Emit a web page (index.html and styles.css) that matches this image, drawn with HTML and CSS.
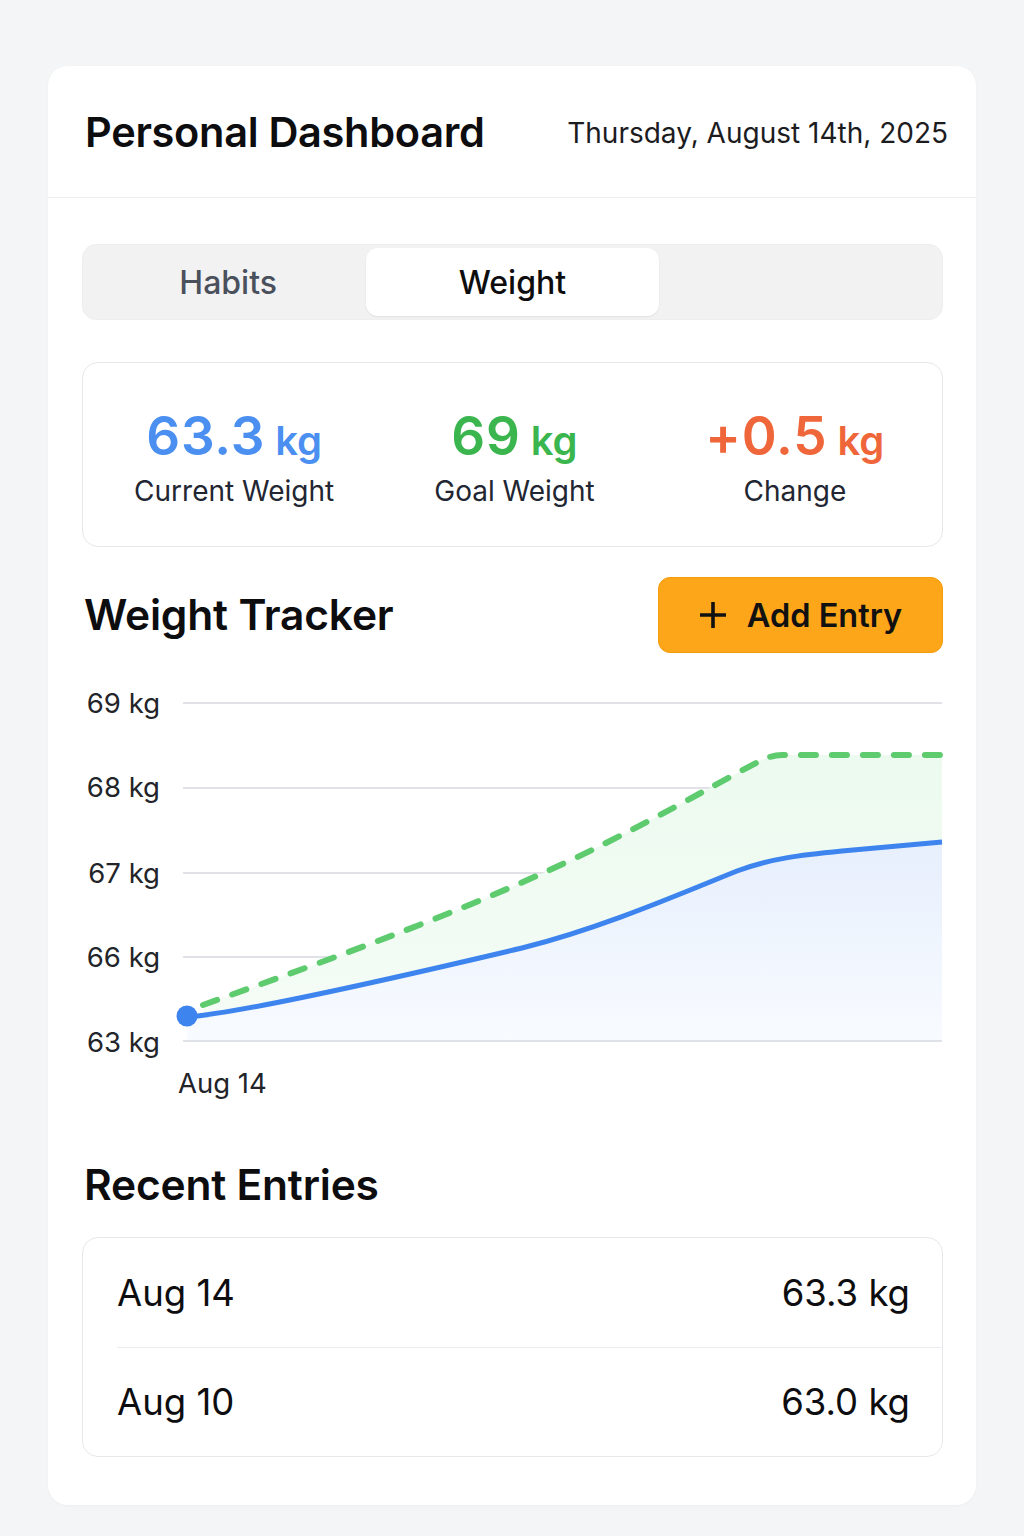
FILE: index.html
```html
<!DOCTYPE html>
<html lang="en">
<head>
<meta charset="utf-8">
<title>Personal Dashboard</title>
<link rel="stylesheet" href="styles.css">
</head>
<body>
<main class="card">
  <header class="header">
    <h1 class="title">Personal Dashboard</h1>
    <div class="date">Thursday, August 14th, 2025</div>
  </header>
  <section class="content">
    <nav class="tabs">
      <div class="tab">Habits</div>
      <div class="tab active">Weight</div>
      <div class="tab empty"></div>
    </nav>

    <div class="stats">
      <div class="stat">
        <div class="stat-value blue">63.3<span class="unit">kg</span></div>
        <div class="stat-label">Current Weight</div>
      </div>
      <div class="stat">
        <div class="stat-value green">69<span class="unit">kg</span></div>
        <div class="stat-label">Goal Weight</div>
      </div>
      <div class="stat">
        <div class="stat-value orange">+0.5<span class="unit">kg</span></div>
        <div class="stat-label">Change</div>
      </div>
    </div>

    <div class="tracker-head">
      <h2 class="section-title">Weight Tracker</h2>
      <button class="add-btn">
        <svg class="plus" width="28" height="28" viewBox="0 0 28 28"><path d="M14 1v26M1 14h26" stroke="#111" stroke-width="3.6" stroke-linecap="butt"/></svg>
        <span>Add Entry</span>
      </button>
    </div>

    <svg class="chart" width="861" height="425" viewBox="0 0 861 425">
      <defs>
        <linearGradient id="gfill" x1="0" y1="0" x2="0" y2="1">
          <stop offset="0" stop-color="#ecfaef"/>
          <stop offset="1" stop-color="#f5fcf6"/>
        </linearGradient>
        <linearGradient id="bfill" x1="0" y1="0" x2="0" y2="1">
          <stop offset="0" stop-color="#e7effd"/>
          <stop offset="1" stop-color="#f8fbff"/>
        </linearGradient>
      </defs>
      <g class="grid">
        <line x1="101" y1="23" x2="860" y2="23"/>
        <line x1="101" y1="108" x2="860" y2="108"/>
        <line x1="101" y1="193" x2="860" y2="193"/>
        <line x1="101" y1="277" x2="860" y2="277"/>
      </g>
      <path d="M121,325 C260,275 400,225 520,165 C590,130 650,95 680,80 Q690,75 700,75 L860,75 L860,361 L121,361 Z" fill="url(#gfill)"/>
      <path d="M105,337 C160,333 330,294 440,268 C520,248 600,213 655,191 C690,178 720,175 760,171 L860,162 L860,361 L105,361 Z" fill="url(#bfill)"/>
      <line class="gridline" x1="101" y1="361" x2="860" y2="361"/>
      <path d="M121,325 C260,275 400,225 520,165 C590,130 650,95 680,80 Q690,75 700,75 L860,75" fill="none" stroke="#5dcb6e" stroke-width="6" stroke-linecap="round" stroke-dasharray="15 16"/>
      <path d="M105,337 C160,333 330,294 440,268 C520,248 600,213 655,191 C690,178 720,175 760,171 L860,162" fill="none" stroke="#3d84ee" stroke-width="5"/>
      <circle cx="105" cy="336" r="10.5" fill="#3d84ee"/>
      <g class="ylabels">
        <text x="78" y="33">69 kg</text>
        <text x="78" y="117">68 kg</text>
        <text x="78" y="203">67 kg</text>
        <text x="78" y="287">66 kg</text>
        <text x="78" y="372">63 kg</text>
      </g>
      <text class="xlabel" x="96" y="413">Aug 14</text>
    </svg>

    <h2 class="section-title recent-title">Recent Entries</h2>
    <div class="entries">
      <div class="entry"><span>Aug 14</span><span>63.3 kg</span></div>
      <div class="entry"><span>Aug 10</span><span>63.0 kg</span></div>
    </div>
  </section>
</main>
</body>
</html>
```

FILE: styles.css
```css
* { box-sizing: border-box; }

html, body {
  margin: 0;
  padding: 0;
}

body {
  background: #f4f5f7;
  font-family: "Inter", "Liberation Sans", Arial, sans-serif;
  color: #111;
  padding: 66px 48px 32px;
}

.card {
  background: #fff;
  border-radius: 20px;
  box-shadow: 0 1px 3px rgba(0, 0, 0, 0.03);
  overflow: hidden;
}

.header {
  height: 132px;
  display: flex;
  align-items: center;
  justify-content: space-between;
  padding: 0 28px 0 37px;
  border-bottom: 1px solid #ebecef;
}

.title {
  margin: 0;
  font-size: 41.5px;
  font-weight: 600;
  letter-spacing: -0.3px;
  color: #0d0d0f;
}

.date {
  font-size: 28px;
  font-weight: 400;
  color: #1c1c1f;
  padding-top: 2px;
}

.content {
  padding: 46px 33px 48px 34px;
}

.tabs {
  display: grid;
  grid-template-columns: repeat(3, 1fr);
  height: 76px;
  padding: 3px;
  background: #f2f2f3;
  border-radius: 14px;
  border: 1px solid #eeeef0;
}

.tab {
  display: flex;
  align-items: center;
  justify-content: center;
  font-size: 32px;
  font-weight: 500;
  color: #4a505c;
  border-radius: 12px;
}

.tab.active {
  margin: 0 -4px;
  background: #fff;
  color: #0d0d0f;
  box-shadow: 0 1px 2px rgba(0, 0, 0, 0.08);
}

.stats {
  margin-top: 42px;
  display: grid;
  grid-template-columns: repeat(3, 1fr);
  border: 1px solid #e7e8ec;
  border-radius: 16px;
  padding: 47px 7px 38px 11px;
}

.stat {
  display: flex;
  flex-direction: column;
  align-items: center;
}

.stat-value {
  font-size: 53px;
  font-weight: 600;
  line-height: 1;
  height: 50px;
  display: flex;
  align-items: baseline;
  letter-spacing: 0.8px;
}

.unit {
  font-size: 40px;
  margin-left: 10px;
  letter-spacing: 0;
}

.blue { color: #4b8ff1; }
.green { color: #3bb64f; }
.orange { color: #ef663a; }

.stat-label {
  margin-top: 14px;
  font-size: 28px;
  line-height: 34px;
  color: #222632;
}

.tracker-head {
  margin-top: 30px;
  display: flex;
  align-items: center;
  justify-content: space-between;
}

.section-title {
  margin: 0 0 0 2px;
  font-size: 42.5px;
  font-weight: 600;
  line-height: 48px;
  letter-spacing: -0.2px;
  color: #0d0d0f;
}

.add-btn {
  width: 285px;
  height: 76px;
  display: flex;
  align-items: center;
  justify-content: center;
  gap: 20px;
  background: #fea619;
  border: 1px solid #f39c0c;
  border-radius: 12px;
  font-family: inherit;
  font-size: 32.5px;
  font-weight: 600;
  color: #111;
  padding: 0;
}

.plus { display: block; }

.chart {
  display: block;
  margin-top: 27px;
}

.chart .grid line,
.chart .gridline {
  stroke: #d6d9df;
  stroke-width: 1.5;
}

.chart text {
  font-family: "Inter", "Liberation Sans", Arial, sans-serif;
  font-size: 27.5px;
  fill: #222429;
}

.ylabels text { text-anchor: end; }

.chart .xlabel { font-size: 27.5px; }

.recent-title {
  margin-top: 56px;
}

.entries {
  margin-top: 28px;
  border: 1px solid #e7e8ec;
  border-radius: 16px;
}

.entry {
  height: 109px;
  margin-left: 34px;
  padding-right: 32px;
  display: flex;
  align-items: center;
  justify-content: space-between;
  font-size: 36.5px;
  color: #0d0d0f;
}

.entry + .entry {
  border-top: 1px solid #ebecf0;
}
```
